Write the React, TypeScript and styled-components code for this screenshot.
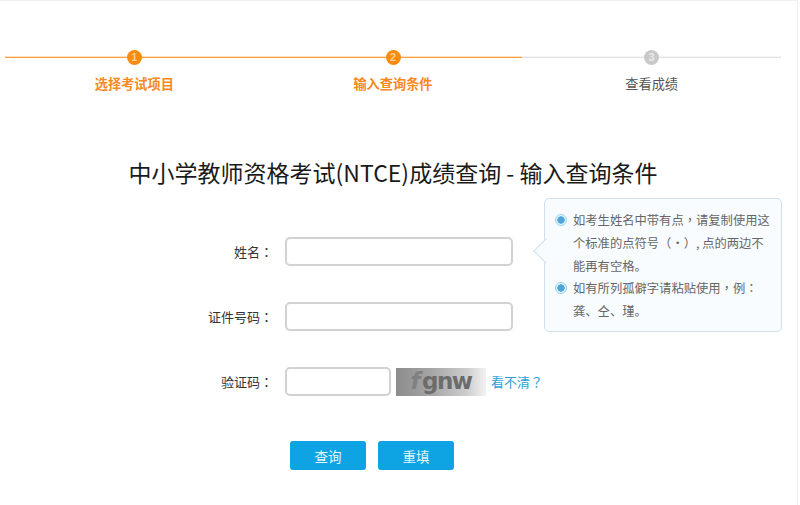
import React from 'react'
import styled, { createGlobalStyle } from 'styled-components'

const GlobalStyle = createGlobalStyle`
  html, body {
    margin: 0;
    padding: 0;
    background: #fff;
  }
  body {
    font-family: "Noto Sans CJK SC", "Liberation Sans", sans-serif;
    text-spacing-trim: space-all;
  }
`

const Page = styled.div`
  width: 798px;
  height: 505px;
  overflow: hidden;
  background: #fff;
  padding-top: 48px;
  box-sizing: border-box;
  border-top: 1px solid #f0f0f0;
  border-right: 1px solid #f0f0f0;
`

const Stepper = styled.div`
  display: flex;
  width: 776px;
  margin-left: 5px;
`

const Step = styled.div<{ $active?: boolean }>`
  position: relative;
  flex: 1;
  display: flex;
  flex-direction: column;
  align-items: center;
  color: ${(p) => (p.$active ? '#f8891c' : '#555')};
  font-weight: ${(p) => (p.$active ? 700 : 400)};
`

const StepLine = styled.i<{ $active?: boolean }>`
  position: absolute;
  left: 0;
  right: 0;
  top: 8px;
  height: 1px;
  background: ${(p) => (p.$active ? '#f9a441' : '#e2e2e2')};
  box-shadow: 0 -1px 0 ${(p) => (p.$active ? 'rgba(249, 164, 65, 0.35)' : 'rgba(226, 226, 226, 0.35)')};
`

const Dot = styled.span<{ $active?: boolean }>`
  position: relative;
  width: 15px;
  height: 15px;
  border-radius: 50%;
  background: ${(p) => (p.$active ? '#f98c0e' : '#c9c9c9')};
  color: ${(p) => (p.$active ? '#ffcf90' : '#e9e9e9')};
  font: 700 11px/15px "Liberation Sans", sans-serif;
  text-align: center;
  margin-top: 1px;
`

const StepLabel = styled.div`
  font-size: 13.2px;
  line-height: 20px;
  margin-top: 9px;
`

const Title = styled.h1`
  margin: 61px 0 0 0;
  width: 786px;
  text-align: center;
  font-size: 23px;
  line-height: 34px;
  font-weight: 400;
  color: #1a1a1a;
`

const Form = styled.div`
  position: relative;
  margin-top: 48px;
`

const Row = styled.div`
  display: flex;
  align-items: center;
  height: 29px;
  margin-bottom: 36px;
`

const Label = styled.label`
  width: 273px;
  text-align: right;
  font-size: 13px;
  color: #333;
  margin-right: 12px;
  white-space: nowrap;
`

// full-width punctuation sits in the middle of its box in the reference
const Punct = styled.span`
  font-family: "Noto Sans CJK TC", sans-serif;
`

const Input = styled.input<{ $short?: boolean }>`
  width: ${(p) => (p.$short ? '106px' : '228px')};
  height: 29px;
  box-sizing: border-box;
  border: 2px solid #d2d2d2;
  border-radius: 5px;
  background: #fff;
  outline: none;
  padding: 0 8px;
`

const Captcha = styled.div`
  width: 90px;
  height: 28px;
  margin-left: 5px;
  background: linear-gradient(90deg, #8c8c8c 0%, #a6a6a6 40%, #cfcfcf 80%, #f2f2f2 100%);
  font: 700 23px/26px "DejaVu Sans", "Liberation Sans", sans-serif;
  color: #6c6c6c;
  text-align: center;
  letter-spacing: -1.5px;
  overflow: hidden;
  white-space: nowrap;
`

const CaptchaF = styled.span`
  font-style: italic;
  color: #808080;
  margin-right: 3px;
`

const HelpLink = styled.a`
  margin-left: 5px;
  font-size: 13px;
  color: #2b9fd8;
  white-space: nowrap;
`

const Buttons = styled.div`
  display: flex;
  gap: 12px;
  padding-left: 290px;
  padding-top: 9px;
`

const Button = styled.button`
  width: 76px;
  height: 29px;
  border: 0;
  border-radius: 3px;
  background: #0ea3e3;
  color: #e8f7ff;
  font-family: inherit;
  font-size: 13.5px;
  padding: 0;
`

const Tip = styled.div`
  position: absolute;
  left: 544px;
  top: -39px;
  width: 238px;
  height: 134px;
  box-sizing: border-box;
  padding: 10px 10px 0 10px;
  background: #f8fcff;
  border: 1px solid #d0e0ee;
  border-radius: 5px;
  font-size: 12.3px;
  line-height: 22.8px;
  color: #666;

  &::before {
    content: '';
    position: absolute;
    left: -8px;
    top: 43px;
    width: 17px;
    height: 17px;
    background: #f8fcff;
    border-left: 1px solid #d0e0ee;
    border-bottom: 1px solid #d0e0ee;
    transform: rotate(45deg);
  }
`

const TipItem = styled.div`
  position: relative;
  display: flex;
  gap: 6px;
  white-space: nowrap;
`

const Bullet = styled.span`
  flex: none;
  width: 12px;
  height: 12px;
  margin-top: 5px;
  box-sizing: border-box;
  border-radius: 50%;
  border: 1px solid #9fd3ee;
  background: radial-gradient(circle, #4ea7d8 0 3.4px, #e6f4fc 4px);
`

const steps = ['选择考试项目', '输入查询条件', '查看成绩']

export default function App() {
  return (
    <Page>
      <GlobalStyle />
      <Stepper>
        {steps.map((label, i) => (
          <Step key={label} $active={i < 2}>
            <StepLine $active={i < 2} />
            <Dot $active={i < 2}>{i + 1}</Dot>
            <StepLabel>{label}</StepLabel>
          </Step>
        ))}
      </Stepper>
      <Title>中小学教师资格考试(NTCE)成绩查询 - 输入查询条件</Title>
      <Form>
        <Row>
          <Label>姓名<Punct>：</Punct></Label>
          <Input />
        </Row>
        <Row>
          <Label>证件号码<Punct>：</Punct></Label>
          <Input />
        </Row>
        <Row>
          <Label>验证码<Punct>：</Punct></Label>
          <Input $short />
          <Captcha><CaptchaF>f</CaptchaF>gnw</Captcha>
          <HelpLink>看不清<Punct>？</Punct></HelpLink>
        </Row>
        <Buttons>
          <Button>查询</Button>
          <Button>重填</Button>
        </Buttons>
        <Tip>
          <TipItem>
            <Bullet />
            <div>
              如考生姓名中带有点<Punct>，</Punct>请复制使用这<br />
              个标准的点符号<Punct>（·）</Punct>, 点的两边不<br />
              能再有空格。
            </div>
          </TipItem>
          <TipItem>
            <Bullet />
            <div>
              如有所列孤僻字请粘贴使用<Punct>，</Punct>例<Punct>：</Punct><br />
              龚、仝、瑾。
            </div>
          </TipItem>
        </Tip>
      </Form>
    </Page>
  )
}
